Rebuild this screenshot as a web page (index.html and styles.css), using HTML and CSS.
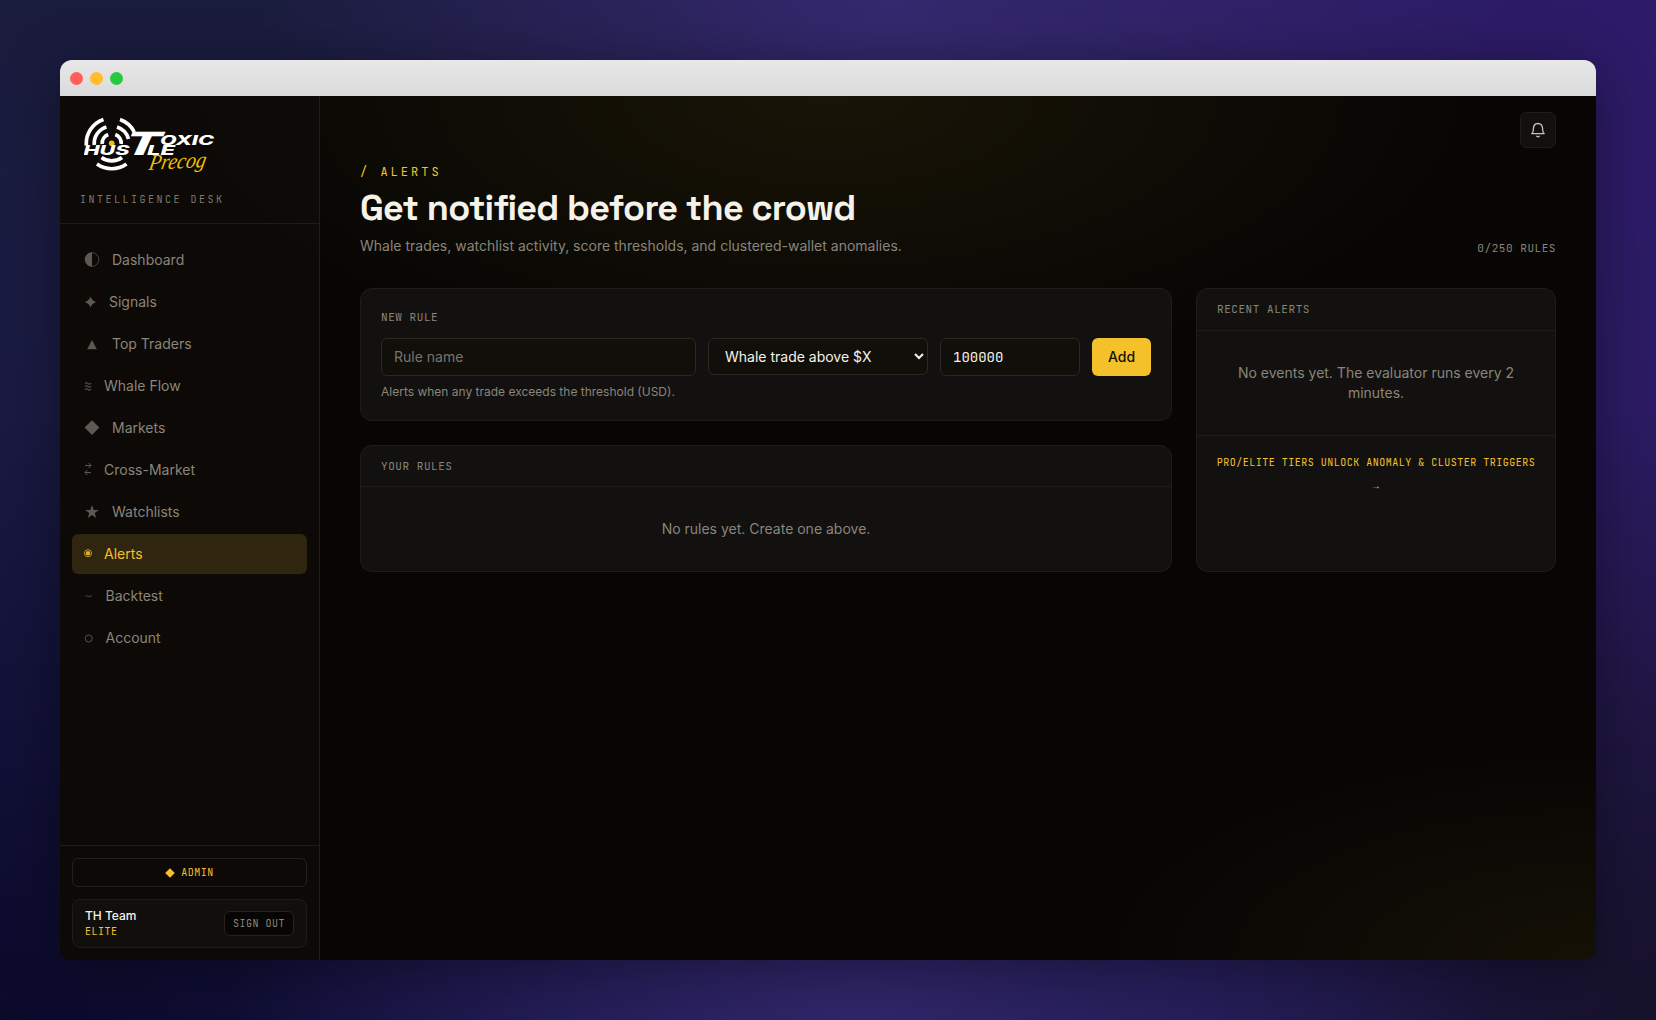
FILE: index.html
```html
<!DOCTYPE html>
<html lang="en">
<head>
<meta charset="utf-8">
<title>Alerts</title>
<link rel="stylesheet" href="styles.css">
</head>
<body>
<div class="window">
  <div class="titlebar"><i class="light red"></i><i class="light amber"></i><i class="light green"></i></div>
  <div class="app">
    <aside class="sidebar">
      <div class="brand">
        <svg class="logo" width="136" height="64" viewBox="0 0 136 64">
          <g fill="none" stroke="#fff" stroke-width="3.7">
            <path d="M2.4 28.5A25.3 25.3 0 0 1 19.5 2.4M36 2.4A25.3 25.3 0 0 1 50.3 15M13 47A25.3 25.3 0 0 0 42.5 47"/>
            <path d="M10.3 28A17.3 17.3 0 0 1 22.4 9.9M33 9.9A17.3 17.3 0 0 1 44.5 22M17.5 40.5A17.3 17.3 0 0 0 38 40.5"/>
            <path d="M18.2 27A9.5 9.5 0 0 1 24.2 17.5M31.3 17.5A9.5 9.5 0 0 1 37.2 27"/>
          </g>
          <circle cx="27.7" cy="26.3" r="2.8" fill="#f0c000"/>
          <g class="logo-word">
            <text x="-.5" y="38" font-size="13.5" textLength="46" lengthAdjust="spacingAndGlyphs">HUS</text>
            <text font-size="32" textLength="36" lengthAdjust="spacingAndGlyphs" transform="translate(39 38) skewX(-10)">T</text>
            <text x="76" y="27.5" font-size="13" textLength="54" lengthAdjust="spacingAndGlyphs">OXIC</text>
            <text x="63" y="38" font-size="13.5" textLength="28" lengthAdjust="spacingAndGlyphs">LE</text>
          </g>
          <text class="logo-script" font-size="22" textLength="57" lengthAdjust="spacingAndGlyphs" transform="translate(64 53) rotate(-3) skewX(-14)">Precog</text>
        </svg>
        <div class="tagline">INTELLIGENCE DESK</div>
      </div>
      <nav class="nav">
        <a class="item"><svg width="16" height="16" viewBox="0 0 16 16"><circle cx="8" cy="7.500" r="6.900" fill="none" stroke="currentColor" stroke-width=".7"/><path d="M8 .5a7 7 0 0 0 0 14z" fill="currentColor"/></svg>Dashboard</a>
        <a class="item"><svg width="13" height="16" viewBox="0 0 13 16"><path d="M6.500 2.200Q7.500 6.500 12.300 8Q7.500 9.500 6.500 13.800Q5.500 9.500 .7 8Q5.500 6.500 6.500 2.200z" fill="currentColor"/></svg>Signals</a>
        <a class="item"><svg width="16" height="16" viewBox="0 0 16 16"><path d="M8 4l4.800 9.300H3.200z" fill="currentColor"/></svg>Top Traders</a>
        <a class="item"><svg width="8" height="16" viewBox="0 0 8 16"><path d="M1 5.500q1.700-1.500 3 0t3-.3M1 8.500q1.700-1.500 3 0t3-.3M1 11.500q1.700-1.500 3 0t3-.3" fill="none" stroke="currentColor" stroke-width="1.100"/></svg>Whale Flow</a>
        <a class="item"><svg width="16" height="16" viewBox="0 0 16 16"><path d="M8 .2l7.400 7.400L8 15 .6 7.600z" fill="currentColor"/></svg>Markets</a>
        <a class="item"><svg width="8" height="16" viewBox="0 0 8 16"><path d="M1 3.500h6M4.500 1L7 3.500 4.500 6M7 10.500H1M3.300 8L1 10.500l2.300 2.500" fill="none" stroke="currentColor"/></svg>Cross-Market</a>
        <a class="item"><svg width="16" height="16" viewBox="0 0 16 16"><path d="M8 1l1.700 4.900h5.100l-4.100 3.100 1.500 5L8 11l-4.200 3 1.500-5-4.100-3.100h5.100z" fill="currentColor"/></svg>Watchlists</a>
        <a class="item active"><svg width="8" height="16" viewBox="0 0 8 16" overflow="visible"><circle cx="4" cy="7.200" r="3.600" fill="none" stroke="currentColor" stroke-width=".8"/><circle cx="4" cy="7.200" r="2.200" fill="currentColor"/></svg>Alerts</a>
        <a class="item"><svg width="9.500" height="16" viewBox="0 0 9.500 16"><path d="M1.200 9q1.600-2.400 3.200-.8t3.200-.8" fill="none" stroke="currentColor" stroke-width=".8"/></svg>Backtest</a>
        <a class="item"><svg width="9.500" height="16" viewBox="0 0 9.500 16"><circle cx="4.700" cy="8.500" r="3.500" fill="none" stroke="currentColor" stroke-width=".9"/></svg>Account</a>
      </nav>
      <div class="account">
        <a class="admin"><svg width="10" height="10" viewBox="0 0 10 10"><path d="M5 .2L9.800 5 5 9.800.2 5z" fill="currentColor"/></svg>ADMIN</a>
        <div class="user">
          <div><div class="user-name">TH Team</div><div class="tier">ELITE</div></div>
          <button class="signout">SIGN OUT</button>
        </div>
      </div>
    </aside>
    <main class="main">
      <div class="topbar"><button class="bell"><svg width="16" height="16" viewBox="0 0 16 16" fill="none" stroke="currentColor" stroke-width="1.300" stroke-linecap="round" stroke-linejoin="round"><path d="M1.800 11.600h12.400c-1.300-1-1.600-2.400-1.600-4.700C12.600 3.200 10.500 1.500 8 1.500S3.400 3.200 3.400 6.900c0 2.300-.3 3.700-1.600 4.700zM6.700 14.300c.7.600 1.900.6 2.600 0"/></svg></button></div>
      <header class="head">
        <div>
          <div class="eyebrow">/ ALERTS</div>
          <h1>Get notified before the crowd</h1>
          <p class="sub">Whale trades, watchlist activity, score thresholds, and clustered-wallet anomalies.</p>
        </div>
        <div class="quota">0/250 RULES</div>
      </header>
      <div class="grid">
        <div class="left">
          <section class="card form">
            <div class="label">NEW RULE</div>
            <div class="fields">
              <input class="field name" placeholder="Rule name">
              <select class="field kind"><option>Whale trade above $X</option></select>
              <input class="field amount" value="100000">
              <button class="add">Add</button>
            </div>
            <p class="hint">Alerts when any trade exceeds the threshold (USD).</p>
          </section>
          <section class="card rules">
            <div class="card-head label">YOUR RULES</div>
            <div class="empty">No rules yet. Create one above.</div>
          </section>
        </div>
        <section class="card">
          <div class="card-head label">RECENT ALERTS</div>
          <div class="empty events">No events yet. The evaluator runs every 2 minutes.</div>
          <div class="upsell"><a>PRO/ELITE TIERS UNLOCK ANOMALY &amp; CLUSTER TRIGGERS <span class="arrow">→</span></a></div>
        </section>
      </div>
    </main>
  </div>
</div>
</body>
</html>
```
FILE: styles.css
```css
* { box-sizing: border-box; }
:root { --line: #1e1d1a; --muted: #89857a; --gold: #f4c12b; --mono: "JetBrains Mono", "DejaVu Sans Mono", monospace; }
body {
  margin: 0; padding: 60px; height: 1020px; overflow: hidden;
  font: 14px/20px Inter, sans-serif; color: #f5f2ea;
  background:
    radial-gradient(ellipse 38% 60% at 54% 0, #35296f 0, transparent 100%),
    radial-gradient(ellipse 38% 60% at 52% 100%, #31266a 0, transparent 100%),
    radial-gradient(ellipse 50% 60% at 0 100%, #0b0a2b 0, transparent 100%),
    radial-gradient(ellipse 30% 60% at 100% 100%, #17122a 0, transparent 100%),
    radial-gradient(ellipse 60% 120% at 100% 0, #2e1b6a 0, #2b1b62 50%, transparent 100%),
    linear-gradient(#1b1d3e, #19174a);
}
button, input, select { font: inherit; margin: 0; }
.window { height: 900px; border-radius: 12px; overflow: hidden; display: flex; flex-direction: column; box-shadow: 0 8px 60px rgba(0,0,0,.4); }
.titlebar { height: 36px; flex: none; display: flex; align-items: center; gap: 7px; padding: 0 10px; background: linear-gradient(#e8e8e8, #dadada); }
.light { width: 13px; height: 13px; border-radius: 50%; }
.red { background: #ff5f57; } .amber { background: #ffbd2e; } .green { background: #28c840; }
.app {
  flex: 1; display: grid; grid-template-columns: 260px 1fr;
  background:
    radial-gradient(ellipse 920px 400px at 50% 0, rgba(235,190,40,.08), transparent 70%),
    radial-gradient(ellipse 620px 260px at 100% 100%, rgba(242,190,40,.06), transparent 80%),
    #070604;
}
.sidebar { display: flex; flex-direction: column; border-right: 1px solid var(--line); background: rgba(14,10,8,.85); }
.brand { height: 128px; padding: 20px 20px 0; border-bottom: 1px solid var(--line); }
.logo { display: block; margin: 1px 0 0 4px; }
.logo-word { font-family: Inter, sans-serif; font-weight: 800; font-style: italic; fill: #fff; }
.logo-script { font-family: "Liberation Serif", serif; font-style: italic; fill: #f0c000; }
.tagline { margin-top: 9px; font: 10px/20px var(--mono); letter-spacing: 2.5px; color: #7d796f; }
.nav { flex: 1; display: flex; flex-direction: column; gap: 2px; padding: 16px 12px; }
.item { height: 40px; display: flex; align-items: center; gap: 12px; padding: 0 12px; border-radius: 6px; color: var(--muted); }
.item svg { flex: none; opacity: .65; }
.item.active { color: var(--gold); background: #30250e; }
.item.active svg { opacity: .9; }
.account { padding: 12px; border-top: 1px solid var(--line); }
.admin { height: 29px; display: flex; align-items: center; justify-content: center; gap: 6px; border: 1px solid #24211d; border-radius: 6px; font: 10px/14px var(--mono); letter-spacing: .5px; color: var(--gold); }
.user { height: 49px; margin-top: 12px; padding: 0 12px; display: flex; align-items: center; justify-content: space-between; border: 1px solid var(--line); border-radius: 8px; background: #100f0b; }
.user-name { font: 500 12px/16px Inter, sans-serif; }
.tier { font: 10px/15px var(--mono); letter-spacing: .5px; color: var(--gold); }
.signout { width: 70px; height: 25px; padding: 0; border: 1px solid #24231f; border-radius: 6px; background: #070604; font: 10px/14px var(--mono); letter-spacing: .5px; color: var(--muted); }
.main { padding: 16px 40px; }
.topbar { display: flex; justify-content: flex-end; }
.bell { width: 36px; height: 36px; padding: 0; display: grid; place-items: center; border: 1px solid var(--line); border-radius: 6px; background: #11100c; color: #c5c2ba; }
.head { display: flex; justify-content: space-between; align-items: flex-end; margin-top: 14px; }
.eyebrow { font: 12px/20px var(--mono); letter-spacing: 3px; color: var(--gold); }
h1 { margin: 6px 0 8px; font: 600 36px/40px "Space Grotesk", Inter, sans-serif; letter-spacing: -.72px; white-space: nowrap; }
.sub { margin: 0; color: var(--muted); }
.quota, .label { font: 11px/16px var(--mono); letter-spacing: .55px; color: var(--muted); }
.grid { display: grid; grid-template-columns: 1fr 360px; gap: 24px; margin-top: 32px; height: 284px; }
.left { display: grid; grid-template-rows: 133px 127px; gap: 24px; }
.card { border: 1px solid var(--line); border-radius: 12px; background: #12110f; overflow: hidden; }
.form { padding: 20px; }
.fields { display: grid; grid-template-columns: 315px 220px 140px 59px; gap: 12px; margin-top: 13px; align-items: start; }
.field { width: 100%; height: 38px; padding: 0 12px 1px; border: 1px solid #2a2924; border-radius: 6px; background: #100f0a; color: #f5f2ea; }
.field::placeholder { color: #77756f; }
.kind { height: 37px; padding-bottom: 0; }
.amount { padding-bottom: 0; font-family: var(--mono); }
.add { height: 38px; padding: 0; border: 0; border-radius: 6px; background: var(--gold); color: #14110a; font-weight: 500; }
.hint { margin: 8px 0 0; font-size: 12px; line-height: 16px; color: var(--muted); }
.card-head { height: 42px; padding: 12px 20px 0; border-bottom: 1px solid var(--line); }
.rules .card-head { height: 41px; }
.empty { padding: 32px 24px; text-align: center; color: var(--muted); }
.events { height: 105px; border-bottom: 1px solid var(--line); }
.upsell { padding: 14px 8px; text-align: center; font: 10px/25px var(--mono); letter-spacing: .5px; color: var(--gold); }
.upsell a { display: block; padding: 0 10px; }
.arrow { display: inline-block; line-height: 20px; font-family: "Liberation Mono", monospace; transform: translateY(-2px); }
```
